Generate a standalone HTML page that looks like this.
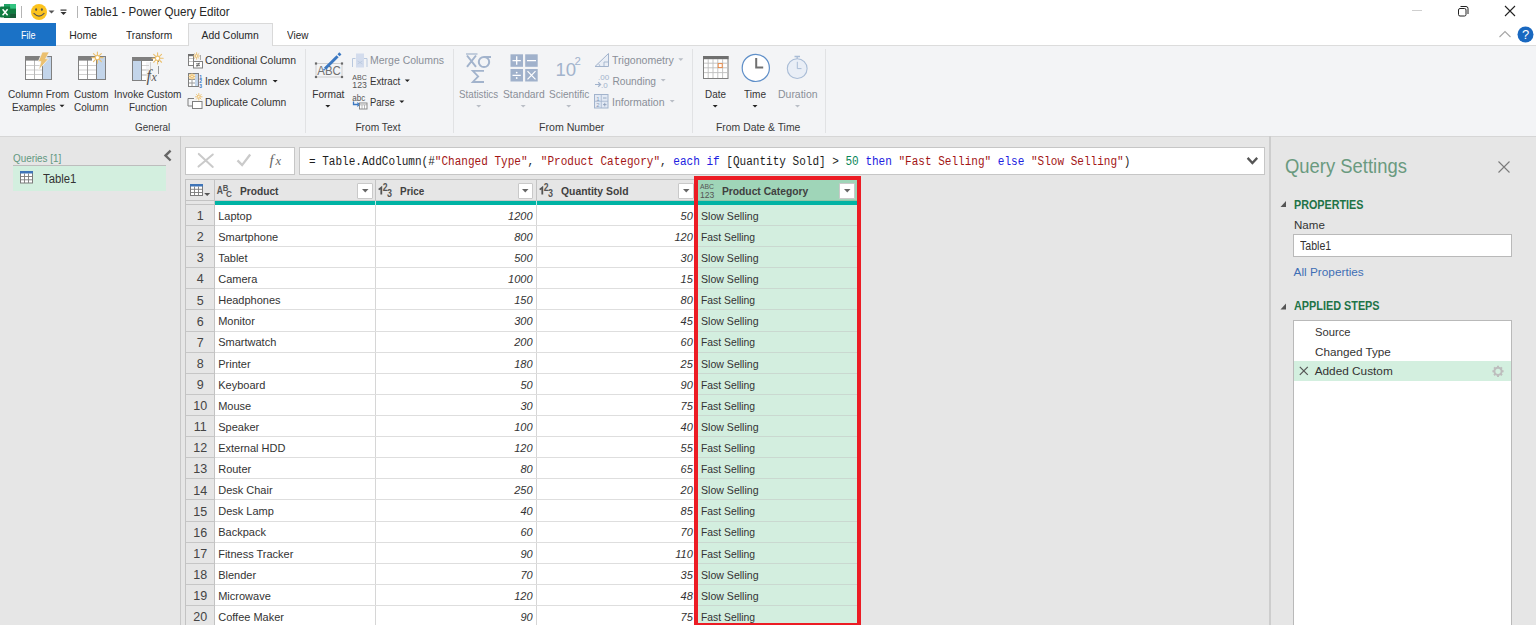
<!DOCTYPE html>
<html><head><meta charset="utf-8"><style>
html,body{margin:0;padding:0;width:1536px;height:625px;overflow:hidden;background:#e6e6e6;}
.t{position:absolute;white-space:nowrap;}
.r{position:absolute;}
svg.r{overflow:visible;}
</style></head><body>
<div class="r" style="left:0px;top:0px;width:1536px;height:23px;background:#ffffff;"></div>
<div class="r" style="left:0px;top:23px;width:1536px;height:23px;background:#ffffff;"></div>
<div class="r" style="left:0px;top:46px;width:1536px;height:90px;background:#f3f4f6;"></div>
<div class="r" style="left:0px;top:45px;width:1536px;height:1px;background:#dcdcdc;"></div>
<div class="r" style="left:0px;top:136px;width:1536px;height:489px;background:#e6e6e6;"></div>
<div class="r" style="left:0px;top:135.5px;width:1536px;height:1px;background:#d6d6d6;"></div>
<svg class="r" style="left:0px;top:3px" width="18" height="17" viewBox="0 0 18 17"><rect x="4" y="1" width="12" height="14" fill="#21a366"/>
<rect x="4" y="5.5" width="12" height="5" fill="#107c41"/>
<rect x="4" y="10.5" width="12" height="4.5" fill="#185c37"/>
<rect x="10" y="1" width="6" height="4.5" fill="#33c481"/>
<rect x="0" y="3.6" width="10.2" height="11" rx="0.8" fill="#107c41"/>
<path d="M2.6 6.2 L7.6 12.2 M7.6 6.2 L2.6 12.2" stroke="#fff" stroke-width="1.5"/></svg>
<div class="r" style="left:21px;top:5.5px;width:1px;height:12.5px;background:#b4b4b4;"></div>
<svg class="r" style="left:30px;top:3px" width="20" height="19" viewBox="0 0 20 19"><circle cx="9" cy="9" r="8" fill="#fcc31e"/>
<ellipse cx="6.1" cy="6.6" rx="1" ry="1.4" fill="#555"/><ellipse cx="11.9" cy="6.6" rx="1" ry="1.4" fill="#555"/>
<path d="M3.6 10.2 Q9 16 14.4 10.2" stroke="#555" stroke-width="1.1" fill="none"/></svg>
<svg class="r" style="left:48px;top:10px" width="8" height="4" viewBox="0 0 8 4"><path d="M0.5 0.5 L6.5 0.5 L3.5 3.5Z" fill="#555"/></svg>
<svg class="r" style="left:60px;top:9px" width="8" height="7" viewBox="0 0 8 7"><rect x="0.5" y="0.5" width="6" height="1.2" fill="#333"/><path d="M0.5 3 L6.5 3 L3.5 6Z" fill="#333"/></svg>
<div class="r" style="left:77px;top:5.5px;width:1px;height:12.5px;background:#b4b4b4;"></div>
<div class="t" style="left:84.30px;top:5.90px;font-size:12.40px;line-height:12.40px;color:#262626;font-family:'Liberation Sans', sans-serif;transform:scaleX(0.9355);transform-origin:0 0;">Table1 - Power Query Editor</div>
<div class="r" style="left:1412px;top:10px;width:10px;height:1px;background:#cfcfcf;"></div>
<svg class="r" style="left:1456px;top:5px" width="14" height="12" viewBox="0 0 14 12"><rect x="2.5" y="3.5" width="7.5" height="7.5" rx="1.5" fill="none" stroke="#222" stroke-width="1"/>
<path d="M4.5 1.5 H10 Q12 1.5 12 3.5 V9" fill="none" stroke="#222" stroke-width="1"/></svg>
<svg class="r" style="left:1504px;top:5px" width="12" height="12" viewBox="0 0 12 12"><path d="M1 1 L11 11 M11 1 L1 11" stroke="#222" stroke-width="1.1"/></svg>
<div class="r" style="left:0px;top:23px;width:56px;height:23px;background:#1b72c6;"></div>
<div class="t" style="left:20.60px;top:30.50px;font-size:10.40px;line-height:10.40px;color:#ffffff;font-family:'Liberation Sans', sans-serif;transform:scaleX(0.8720);transform-origin:0 0;">File</div>
<div class="t" style="left:69.30px;top:30.50px;font-size:10.40px;line-height:10.40px;color:#262626;font-family:'Liberation Sans', sans-serif;">Home</div>
<div class="t" style="left:125.90px;top:30.50px;font-size:10.40px;line-height:10.40px;color:#262626;font-family:'Liberation Sans', sans-serif;transform:scaleX(0.9828);transform-origin:0 0;">Transform</div>
<div class="r" style="left:188px;top:23px;width:85px;height:23px;background:#f3f4f6;border:1px solid #d9d9d9;border-bottom:none;box-sizing:border-box;"></div>
<div class="t" style="left:201.50px;top:30.50px;font-size:10.40px;line-height:10.40px;color:#262626;font-family:'Liberation Sans', sans-serif;">Add Column</div>
<div class="t" style="left:287.30px;top:30.50px;font-size:10.40px;line-height:10.40px;color:#262626;font-family:'Liberation Sans', sans-serif;transform:scaleX(0.9571);transform-origin:0 0;">View</div>
<svg class="r" style="left:1498px;top:30px" width="14" height="9" viewBox="0 0 14 9"><path d="M1.5 7 L7 1.5 L12.5 7" fill="none" stroke="#a6a6a6" stroke-width="1.1"/></svg>
<svg class="r" style="left:1517px;top:26px" width="18" height="18" viewBox="0 0 18 18"><circle cx="8.5" cy="8.5" r="8" fill="#1968c0"/><text x="8.5" y="13.3" text-anchor="middle" font-family="Liberation Sans" font-size="13" fill="#fff">?</text></svg>
<div class="r" style="left:305px;top:49px;width:1px;height:84px;background:#e1e2e4;"></div>
<div class="r" style="left:453px;top:49px;width:1px;height:84px;background:#e1e2e4;"></div>
<div class="r" style="left:692px;top:49px;width:1px;height:84px;background:#e1e2e4;"></div>
<div class="r" style="left:825px;top:49px;width:1px;height:84px;background:#e1e2e4;"></div>
<div class="t" style="left:134.90px;top:123.07px;font-size:10.20px;line-height:10.20px;color:#3a3a3a;font-family:'Liberation Sans', sans-serif;transform:scaleX(0.9694);transform-origin:0 0;">General</div>
<div class="t" style="left:355.40px;top:123.07px;font-size:10.20px;line-height:10.20px;color:#3a3a3a;font-family:'Liberation Sans', sans-serif;">From Text</div>
<div class="t" style="left:538.50px;top:123.07px;font-size:10.20px;line-height:10.20px;color:#3a3a3a;font-family:'Liberation Sans', sans-serif;transform:scaleX(1.0408);transform-origin:0 0;">From Number</div>
<div class="t" style="left:715.60px;top:123.07px;font-size:10.20px;line-height:10.20px;color:#3a3a3a;font-family:'Liberation Sans', sans-serif;transform:scaleX(1.0209);transform-origin:0 0;">From Date &amp; Time</div>
<div class="t" style="left:7.90px;top:89.67px;font-size:10.20px;line-height:10.20px;color:#333333;font-family:'Liberation Sans', sans-serif;transform:scaleX(0.9925);transform-origin:0 0;">Column From</div>
<div class="t" style="left:12.20px;top:102.87px;font-size:10.20px;line-height:10.20px;color:#333333;font-family:'Liberation Sans', sans-serif;transform:scaleX(0.9715);transform-origin:0 0;">Examples</div>
<div class="t" style="left:73.70px;top:89.67px;font-size:10.20px;line-height:10.20px;color:#333333;font-family:'Liberation Sans', sans-serif;transform:scaleX(0.9818);transform-origin:0 0;">Custom</div>
<div class="t" style="left:73.70px;top:102.87px;font-size:10.20px;line-height:10.20px;color:#333333;font-family:'Liberation Sans', sans-serif;transform:scaleX(0.9818);transform-origin:0 0;">Column</div>
<div class="t" style="left:113.60px;top:89.67px;font-size:10.20px;line-height:10.20px;color:#333333;font-family:'Liberation Sans', sans-serif;transform:scaleX(0.9936);transform-origin:0 0;">Invoke Custom</div>
<div class="t" style="left:128.50px;top:102.87px;font-size:10.20px;line-height:10.20px;color:#333333;font-family:'Liberation Sans', sans-serif;transform:scaleX(0.9714);transform-origin:0 0;">Function</div>
<div class="t" style="left:204.80px;top:56.17px;font-size:10.20px;line-height:10.20px;color:#333333;font-family:'Liberation Sans', sans-serif;transform:scaleX(1.0237);transform-origin:0 0;">Conditional Column</div>
<div class="t" style="left:204.80px;top:77.07px;font-size:10.20px;line-height:10.20px;color:#333333;font-family:'Liberation Sans', sans-serif;transform:scaleX(0.9883);transform-origin:0 0;">Index Column</div>
<div class="t" style="left:204.80px;top:97.87px;font-size:10.20px;line-height:10.20px;color:#333333;font-family:'Liberation Sans', sans-serif;transform:scaleX(1.0108);transform-origin:0 0;">Duplicate Column</div>
<div class="t" style="left:312.20px;top:89.67px;font-size:10.20px;line-height:10.20px;color:#333333;font-family:'Liberation Sans', sans-serif;">Format</div>
<div class="t" style="left:369.80px;top:56.17px;font-size:10.20px;line-height:10.20px;color:#8a8f98;font-family:'Liberation Sans', sans-serif;transform:scaleX(1.0290);transform-origin:0 0;">Merge Columns</div>
<div class="t" style="left:369.80px;top:77.07px;font-size:10.20px;line-height:10.20px;color:#333333;font-family:'Liberation Sans', sans-serif;transform:scaleX(0.9520);transform-origin:0 0;">Extract</div>
<div class="t" style="left:369.80px;top:97.87px;font-size:10.20px;line-height:10.20px;color:#333333;font-family:'Liberation Sans', sans-serif;transform:scaleX(0.9278);transform-origin:0 0;">Parse</div>
<div class="t" style="left:458.60px;top:89.67px;font-size:10.20px;line-height:10.20px;color:#8a8f98;font-family:'Liberation Sans', sans-serif;transform:scaleX(0.9608);transform-origin:0 0;">Statistics</div>
<div class="t" style="left:502.50px;top:89.67px;font-size:10.20px;line-height:10.20px;color:#8a8f98;font-family:'Liberation Sans', sans-serif;transform:scaleX(1.0094);transform-origin:0 0;">Standard</div>
<div class="t" style="left:548.60px;top:89.67px;font-size:10.20px;line-height:10.20px;color:#8a8f98;font-family:'Liberation Sans', sans-serif;transform:scaleX(0.9877);transform-origin:0 0;">Scientific</div>
<div class="t" style="left:612.40px;top:56.17px;font-size:10.20px;line-height:10.20px;color:#8a8f98;font-family:'Liberation Sans', sans-serif;transform:scaleX(1.0365);transform-origin:0 0;">Trigonometry</div>
<div class="t" style="left:612.40px;top:77.07px;font-size:10.20px;line-height:10.20px;color:#8a8f98;font-family:'Liberation Sans', sans-serif;">Rounding</div>
<div class="t" style="left:612.40px;top:97.87px;font-size:10.20px;line-height:10.20px;color:#8a8f98;font-family:'Liberation Sans', sans-serif;transform:scaleX(1.0303);transform-origin:0 0;">Information</div>
<div class="t" style="left:705.10px;top:89.67px;font-size:10.20px;line-height:10.20px;color:#333333;font-family:'Liberation Sans', sans-serif;transform:scaleX(0.9711);transform-origin:0 0;">Date</div>
<div class="t" style="left:744.00px;top:89.67px;font-size:10.20px;line-height:10.20px;color:#333333;font-family:'Liberation Sans', sans-serif;transform:scaleX(0.9871);transform-origin:0 0;">Time</div>
<div class="t" style="left:777.80px;top:89.67px;font-size:10.20px;line-height:10.20px;color:#8a8f98;font-family:'Liberation Sans', sans-serif;transform:scaleX(1.0271);transform-origin:0 0;">Duration</div>
<div class="r" style="left:180px;top:136px;width:1px;height:489px;background:#c8c8c8;"></div>
<div class="t" style="left:13.00px;top:152.59px;font-size:11.00px;line-height:11.00px;color:#62987f;font-family:'Liberation Sans', sans-serif;transform:scaleX(0.8961);transform-origin:0 0;">Queries [1]</div>
<svg class="r" style="left:162px;top:149px" width="12" height="13" viewBox="0 0 12 13"><path d="M8.6 1.7 L3.5 6.6 L8.6 11.5" fill="none" stroke="#666" stroke-width="2.4"/></svg>
<div class="r" style="left:13px;top:165px;width:152.5px;height:1.2px;background:#bdbdbd;"></div>
<div class="r" style="left:13px;top:166px;width:152.5px;height:24.5px;background:#d3efdf;"></div>
<div class="t" style="left:42.70px;top:173.14px;font-size:12.00px;line-height:12.00px;color:#333;font-family:'Liberation Sans', sans-serif;transform:scaleX(0.9423);transform-origin:0 0;">Table1</div>
<div class="r" style="left:1269px;top:136px;width:1.5px;height:489px;background:#cdcdcd;"></div>
<div class="t" style="left:1284.90px;top:157.04px;font-size:19.80px;line-height:19.80px;color:#6a9a7f;font-family:'Liberation Sans', sans-serif;transform:scaleX(0.9315);transform-origin:0 0;">Query Settings</div>
<svg class="r" style="left:1497px;top:160px" width="15" height="14" viewBox="0 0 15 14"><path d="M1.5 1.5 L12.5 12.5 M12.5 1.5 L1.5 12.5" stroke="#7a7a7a" stroke-width="1.1"/></svg>
<svg class="r" style="left:1280px;top:200px" width="7" height="8" viewBox="0 0 7 8"><path d="M6 1 L6 7 L0.5 7Z" fill="#555"/></svg>
<div class="t" style="left:1293.60px;top:198.69px;font-size:12.30px;line-height:12.30px;color:#217346;font-family:'Liberation Sans', sans-serif;font-weight:bold;transform:scaleX(0.8767);transform-origin:0 0;">PROPERTIES</div>
<div class="t" style="left:1293.60px;top:219.51px;font-size:11.80px;line-height:11.80px;color:#333;font-family:'Liberation Sans', sans-serif;transform:scaleX(0.9808);transform-origin:0 0;">Name</div>
<div class="r" style="left:1293px;top:234px;width:219px;height:23px;background:#ffffff;border:1px solid #b9b9b9;box-sizing:border-box;"></div>
<div class="t" style="left:1299.80px;top:239.40px;font-size:13.00px;line-height:13.00px;color:#333;font-family:'Liberation Sans', sans-serif;transform:scaleX(0.8149);transform-origin:0 0;">Table1</div>
<div class="t" style="left:1293.60px;top:267.21px;font-size:11.80px;line-height:11.80px;color:#3f6eb5;font-family:'Liberation Sans', sans-serif;">All Properties</div>
<svg class="r" style="left:1280px;top:303px" width="7" height="7" viewBox="0 0 7 7"><path d="M6 0.5 L6 6.5 L0.5 6.5Z" fill="#555"/></svg>
<div class="t" style="left:1293.60px;top:300.49px;font-size:12.30px;line-height:12.30px;color:#217346;font-family:'Liberation Sans', sans-serif;font-weight:bold;transform:scaleX(0.8820);transform-origin:0 0;">APPLIED STEPS</div>
<div class="r" style="left:1293px;top:320px;width:219px;height:320px;background:#ffffff;border:1px solid #b9b9b9;box-sizing:border-box;"></div>
<div class="t" style="left:1314.70px;top:326.81px;font-size:11.80px;line-height:11.80px;color:#333;font-family:'Liberation Sans', sans-serif;transform:scaleX(0.9490);transform-origin:0 0;">Source</div>
<div class="t" style="left:1314.70px;top:346.61px;font-size:11.80px;line-height:11.80px;color:#333;font-family:'Liberation Sans', sans-serif;transform:scaleX(0.9906);transform-origin:0 0;">Changed Type</div>
<div class="r" style="left:1294px;top:361px;width:217px;height:19.7px;background:#d3efdf;"></div>
<div class="t" style="left:1314.70px;top:366.31px;font-size:11.80px;line-height:11.80px;color:#333;font-family:'Liberation Sans', sans-serif;">Added Custom</div>
<div class="r" style="left:185px;top:147px;width:110px;height:28px;background:#ffffff;border:1px solid #c6c6c6;box-sizing:border-box;"></div>
<svg class="r" style="left:196px;top:152px" width="18" height="17" viewBox="0 0 18 17"><path d="M2.8 1.9 L16.8 14.9 M16.8 2.5 L2.5 14.6" stroke="#cacaca" stroke-width="2" stroke-linecap="round"/></svg>
<svg class="r" style="left:235px;top:152px" width="18" height="16" viewBox="0 0 18 16"><path d="M2.5 8.4 L7.1 13.1 L15.2 2.5" fill="none" stroke="#cacaca" stroke-width="2.3" stroke-linejoin="miter"/></svg>
<svg class="r" style="left:266px;top:150px" width="20" height="20" viewBox="0 0 20 20"><text x="3.5" y="14.5" font-family="Liberation Serif" font-style="italic" font-size="15" fill="#666">f</text><text x="9.6" y="15.4" font-family="Liberation Serif" font-style="italic" font-size="12.5" fill="#666">x</text></svg>
<div class="r" style="left:299px;top:147px;width:966px;height:28px;background:#ffffff;border:1px solid #c6c6c6;box-sizing:border-box;"></div>
<svg class="r" style="left:1246px;top:156px" width="13" height="10" viewBox="0 0 13 10"><path d="M1.6 1.9 L6.4 7 L11.2 1.9" fill="none" stroke="#555" stroke-width="2.3"/></svg>
<div class="t" style="left:309.4px;top:155.80px;font-family:'Liberation Mono',monospace;font-size:12px;line-height:12px;transform:scaleX(0.9197);transform-origin:0 0;"><span style="color:#1e1e1e">= Table.AddColumn(#</span><span style="color:#a31515">"Changed Type"</span><span style="color:#1e1e1e">, </span><span style="color:#a31515">"Product Category"</span><span style="color:#1e1e1e">, </span><span style="color:#2020e0">each</span><span style="color:#1e1e1e"> </span><span style="color:#2020e0">if</span><span style="color:#1e1e1e"> [Quantity Sold] &gt; </span><span style="color:#098658">50</span><span style="color:#1e1e1e"> </span><span style="color:#2020e0">then</span><span style="color:#1e1e1e"> </span><span style="color:#a31515">"Fast Selling"</span><span style="color:#1e1e1e"> </span><span style="color:#2020e0">else</span><span style="color:#1e1e1e"> </span><span style="color:#a31515">"Slow Selling"</span><span style="color:#1e1e1e">)</span></div>
<div class="r" style="left:185px;top:179px;width:673px;height:22px;background:#e6e6e6;"></div>
<div class="r" style="left:185px;top:179px;width:673px;height:1px;background:#c3c3c3;"></div>
<div class="r" style="left:185px;top:179px;width:1px;height:446px;background:#c3c3c3;"></div>
<div class="r" style="left:186px;top:201px;width:28.4px;height:424px;background:#e6e6e6;"></div>
<div class="r" style="left:214.4px;top:205px;width:643px;height:420px;background:#ffffff;"></div>
<div class="r" style="left:697px;top:205px;width:161px;height:420px;background:#d3eedf;"></div>
<div class="r" style="left:697px;top:180px;width:161px;height:21px;background:#9fd5b8;"></div>
<div class="r" style="left:214.9px;top:200.9px;width:643px;height:3.8px;background:#00b3a4;"></div>
<div class="r" style="left:215px;top:200px;width:482px;height:1px;background:#c9c9c9;"></div>
<div class="r" style="left:697px;top:200px;width:161px;height:1px;background:#8fc4a8;"></div>
<div class="r" style="left:374.65px;top:201px;width:1.5px;height:4px;background:#bfe9e4;"></div>
<div class="r" style="left:535.75px;top:201px;width:1.5px;height:4px;background:#bfe9e4;"></div>
<div class="r" style="left:186px;top:200px;width:28.4px;height:1px;background:#c3c3c3;"></div>
<div class="r" style="left:186px;top:204px;width:28.4px;height:1px;background:#c3c3c3;"></div>
<div class="r" style="left:214px;top:179px;width:1px;height:446px;background:#c3c3c3;"></div>
<div class="r" style="left:374.9px;top:180px;width:1px;height:20.5px;background:#c3c3c3;"></div>
<div class="r" style="left:374.9px;top:205px;width:1px;height:420px;background:#d6d6d6;"></div>
<div class="r" style="left:536.0px;top:180px;width:1px;height:20.5px;background:#c3c3c3;"></div>
<div class="r" style="left:536.0px;top:205px;width:1px;height:420px;background:#d6d6d6;"></div>
<div class="r" style="left:696.5px;top:180px;width:1px;height:20.5px;background:#c3c3c3;"></div>
<div class="r" style="left:696.5px;top:205px;width:1px;height:420px;background:#d6d6d6;"></div>
<div class="r" style="left:186px;top:225px;width:28px;height:1px;background:#c6c6c6;"></div>
<div class="r" style="left:215px;top:225px;width:482px;height:1px;background:#dedede;"></div>
<div class="r" style="left:697px;top:225px;width:161px;height:1px;background:#cad8d0;"></div>
<div class="r" style="left:186px;top:246px;width:28px;height:1px;background:#c6c6c6;"></div>
<div class="r" style="left:215px;top:246px;width:482px;height:1px;background:#dedede;"></div>
<div class="r" style="left:697px;top:246px;width:161px;height:1px;background:#cad8d0;"></div>
<div class="r" style="left:186px;top:267px;width:28px;height:1px;background:#c6c6c6;"></div>
<div class="r" style="left:215px;top:267px;width:482px;height:1px;background:#dedede;"></div>
<div class="r" style="left:697px;top:267px;width:161px;height:1px;background:#cad8d0;"></div>
<div class="r" style="left:186px;top:288px;width:28px;height:1px;background:#c6c6c6;"></div>
<div class="r" style="left:215px;top:288px;width:482px;height:1px;background:#dedede;"></div>
<div class="r" style="left:697px;top:288px;width:161px;height:1px;background:#cad8d0;"></div>
<div class="r" style="left:186px;top:309px;width:28px;height:1px;background:#c6c6c6;"></div>
<div class="r" style="left:215px;top:309px;width:482px;height:1px;background:#dedede;"></div>
<div class="r" style="left:697px;top:309px;width:161px;height:1px;background:#cad8d0;"></div>
<div class="r" style="left:186px;top:331px;width:28px;height:1px;background:#c6c6c6;"></div>
<div class="r" style="left:215px;top:331px;width:482px;height:1px;background:#dedede;"></div>
<div class="r" style="left:697px;top:331px;width:161px;height:1px;background:#cad8d0;"></div>
<div class="r" style="left:186px;top:352px;width:28px;height:1px;background:#c6c6c6;"></div>
<div class="r" style="left:215px;top:352px;width:482px;height:1px;background:#dedede;"></div>
<div class="r" style="left:697px;top:352px;width:161px;height:1px;background:#cad8d0;"></div>
<div class="r" style="left:186px;top:373px;width:28px;height:1px;background:#c6c6c6;"></div>
<div class="r" style="left:215px;top:373px;width:482px;height:1px;background:#dedede;"></div>
<div class="r" style="left:697px;top:373px;width:161px;height:1px;background:#cad8d0;"></div>
<div class="r" style="left:186px;top:394px;width:28px;height:1px;background:#c6c6c6;"></div>
<div class="r" style="left:215px;top:394px;width:482px;height:1px;background:#dedede;"></div>
<div class="r" style="left:697px;top:394px;width:161px;height:1px;background:#cad8d0;"></div>
<div class="r" style="left:186px;top:415px;width:28px;height:1px;background:#c6c6c6;"></div>
<div class="r" style="left:215px;top:415px;width:482px;height:1px;background:#dedede;"></div>
<div class="r" style="left:697px;top:415px;width:161px;height:1px;background:#cad8d0;"></div>
<div class="r" style="left:186px;top:436px;width:28px;height:1px;background:#c6c6c6;"></div>
<div class="r" style="left:215px;top:436px;width:482px;height:1px;background:#dedede;"></div>
<div class="r" style="left:697px;top:436px;width:161px;height:1px;background:#cad8d0;"></div>
<div class="r" style="left:186px;top:457px;width:28px;height:1px;background:#c6c6c6;"></div>
<div class="r" style="left:215px;top:457px;width:482px;height:1px;background:#dedede;"></div>
<div class="r" style="left:697px;top:457px;width:161px;height:1px;background:#cad8d0;"></div>
<div class="r" style="left:186px;top:478px;width:28px;height:1px;background:#c6c6c6;"></div>
<div class="r" style="left:215px;top:478px;width:482px;height:1px;background:#dedede;"></div>
<div class="r" style="left:697px;top:478px;width:161px;height:1px;background:#cad8d0;"></div>
<div class="r" style="left:186px;top:499px;width:28px;height:1px;background:#c6c6c6;"></div>
<div class="r" style="left:215px;top:499px;width:482px;height:1px;background:#dedede;"></div>
<div class="r" style="left:697px;top:499px;width:161px;height:1px;background:#cad8d0;"></div>
<div class="r" style="left:186px;top:521px;width:28px;height:1px;background:#c6c6c6;"></div>
<div class="r" style="left:215px;top:521px;width:482px;height:1px;background:#dedede;"></div>
<div class="r" style="left:697px;top:521px;width:161px;height:1px;background:#cad8d0;"></div>
<div class="r" style="left:186px;top:542px;width:28px;height:1px;background:#c6c6c6;"></div>
<div class="r" style="left:215px;top:542px;width:482px;height:1px;background:#dedede;"></div>
<div class="r" style="left:697px;top:542px;width:161px;height:1px;background:#cad8d0;"></div>
<div class="r" style="left:186px;top:563px;width:28px;height:1px;background:#c6c6c6;"></div>
<div class="r" style="left:215px;top:563px;width:482px;height:1px;background:#dedede;"></div>
<div class="r" style="left:697px;top:563px;width:161px;height:1px;background:#cad8d0;"></div>
<div class="r" style="left:186px;top:584px;width:28px;height:1px;background:#c6c6c6;"></div>
<div class="r" style="left:215px;top:584px;width:482px;height:1px;background:#dedede;"></div>
<div class="r" style="left:697px;top:584px;width:161px;height:1px;background:#cad8d0;"></div>
<div class="r" style="left:186px;top:605px;width:28px;height:1px;background:#c6c6c6;"></div>
<div class="r" style="left:215px;top:605px;width:482px;height:1px;background:#dedede;"></div>
<div class="r" style="left:697px;top:605px;width:161px;height:1px;background:#cad8d0;"></div>
<div class="r" style="left:186px;top:626px;width:28px;height:1px;background:#c6c6c6;"></div>
<div class="r" style="left:215px;top:626px;width:482px;height:1px;background:#dedede;"></div>
<div class="r" style="left:697px;top:626px;width:161px;height:1px;background:#cad8d0;"></div>
<div class="r" style="left:357.3px;top:182.5px;width:15.5px;height:16px;background:#ffffff;border:1px solid #c9c9c9;box-sizing:border-box;border-radius:1px;"></div>
<svg class="r" style="left:361.8px;top:188.5px" width="7" height="4" viewBox="0 0 7 4"><path d="M0 0 L6.5 0 L3.25 3.5Z" fill="#666"/></svg>
<div class="r" style="left:517.7px;top:182.5px;width:15.5px;height:16px;background:#ffffff;border:1px solid #c9c9c9;box-sizing:border-box;border-radius:1px;"></div>
<svg class="r" style="left:522.2px;top:188.5px" width="7" height="4" viewBox="0 0 7 4"><path d="M0 0 L6.5 0 L3.25 3.5Z" fill="#666"/></svg>
<div class="r" style="left:678.3px;top:182.5px;width:15.5px;height:16px;background:#ffffff;border:1px solid #c9c9c9;box-sizing:border-box;border-radius:1px;"></div>
<svg class="r" style="left:682.8px;top:188.5px" width="7" height="4" viewBox="0 0 7 4"><path d="M0 0 L6.5 0 L3.25 3.5Z" fill="#666"/></svg>
<div class="r" style="left:839.4px;top:182.5px;width:15.5px;height:16px;background:#ffffff;border:1px solid #c9c9c9;box-sizing:border-box;border-radius:1px;"></div>
<svg class="r" style="left:843.9px;top:188.5px" width="7" height="4" viewBox="0 0 7 4"><path d="M0 0 L6.5 0 L3.25 3.5Z" fill="#666"/></svg>
<div class="t" style="left:196.72px;top:210.02px;font-size:12.50px;line-height:12.50px;color:#444444;font-family:'Liberation Sans', sans-serif;">1</div>
<div class="t" style="left:218.20px;top:210.69px;font-size:11.00px;line-height:11.00px;color:#333333;font-family:'Liberation Sans', sans-serif;">Laptop</div>
<div class="t" style="left:508.12px;top:210.69px;font-size:11.00px;line-height:11.00px;color:#333333;font-family:'Liberation Sans', sans-serif;font-style:italic;">1200</div>
<div class="t" style="left:680.59px;top:210.69px;font-size:11.00px;line-height:11.00px;color:#333333;font-family:'Liberation Sans', sans-serif;font-style:italic;">50</div>
<div class="t" style="left:700.60px;top:210.69px;font-size:11.00px;line-height:11.00px;color:#333333;font-family:'Liberation Sans', sans-serif;transform:scaleX(0.9608);transform-origin:0 0;">Slow Selling</div>
<div class="t" style="left:196.72px;top:231.14px;font-size:12.50px;line-height:12.50px;color:#444444;font-family:'Liberation Sans', sans-serif;">2</div>
<div class="t" style="left:218.20px;top:231.81px;font-size:11.00px;line-height:11.00px;color:#333333;font-family:'Liberation Sans', sans-serif;">Smartphone</div>
<div class="t" style="left:514.23px;top:231.81px;font-size:11.00px;line-height:11.00px;color:#333333;font-family:'Liberation Sans', sans-serif;font-style:italic;">800</div>
<div class="t" style="left:674.43px;top:231.81px;font-size:11.00px;line-height:11.00px;color:#333333;font-family:'Liberation Sans', sans-serif;font-style:italic;">120</div>
<div class="t" style="left:700.60px;top:231.81px;font-size:11.00px;line-height:11.00px;color:#333333;font-family:'Liberation Sans', sans-serif;transform:scaleX(0.9413);transform-origin:0 0;">Fast Selling</div>
<div class="t" style="left:196.72px;top:252.26px;font-size:12.50px;line-height:12.50px;color:#444444;font-family:'Liberation Sans', sans-serif;">3</div>
<div class="t" style="left:218.20px;top:252.93px;font-size:11.00px;line-height:11.00px;color:#333333;font-family:'Liberation Sans', sans-serif;">Tablet</div>
<div class="t" style="left:514.23px;top:252.93px;font-size:11.00px;line-height:11.00px;color:#333333;font-family:'Liberation Sans', sans-serif;font-style:italic;">500</div>
<div class="t" style="left:680.59px;top:252.93px;font-size:11.00px;line-height:11.00px;color:#333333;font-family:'Liberation Sans', sans-serif;font-style:italic;">30</div>
<div class="t" style="left:700.60px;top:252.93px;font-size:11.00px;line-height:11.00px;color:#333333;font-family:'Liberation Sans', sans-serif;transform:scaleX(0.9608);transform-origin:0 0;">Slow Selling</div>
<div class="t" style="left:196.72px;top:273.38px;font-size:12.50px;line-height:12.50px;color:#444444;font-family:'Liberation Sans', sans-serif;">4</div>
<div class="t" style="left:218.20px;top:274.05px;font-size:11.00px;line-height:11.00px;color:#333333;font-family:'Liberation Sans', sans-serif;">Camera</div>
<div class="t" style="left:508.12px;top:274.05px;font-size:11.00px;line-height:11.00px;color:#333333;font-family:'Liberation Sans', sans-serif;font-style:italic;">1000</div>
<div class="t" style="left:680.53px;top:274.05px;font-size:11.00px;line-height:11.00px;color:#333333;font-family:'Liberation Sans', sans-serif;font-style:italic;">15</div>
<div class="t" style="left:700.60px;top:274.05px;font-size:11.00px;line-height:11.00px;color:#333333;font-family:'Liberation Sans', sans-serif;transform:scaleX(0.9608);transform-origin:0 0;">Slow Selling</div>
<div class="t" style="left:196.72px;top:294.50px;font-size:12.50px;line-height:12.50px;color:#444444;font-family:'Liberation Sans', sans-serif;">5</div>
<div class="t" style="left:218.20px;top:295.17px;font-size:11.00px;line-height:11.00px;color:#333333;font-family:'Liberation Sans', sans-serif;">Headphones</div>
<div class="t" style="left:514.23px;top:295.17px;font-size:11.00px;line-height:11.00px;color:#333333;font-family:'Liberation Sans', sans-serif;font-style:italic;">150</div>
<div class="t" style="left:680.59px;top:295.17px;font-size:11.00px;line-height:11.00px;color:#333333;font-family:'Liberation Sans', sans-serif;font-style:italic;">80</div>
<div class="t" style="left:700.60px;top:295.17px;font-size:11.00px;line-height:11.00px;color:#333333;font-family:'Liberation Sans', sans-serif;transform:scaleX(0.9413);transform-origin:0 0;">Fast Selling</div>
<div class="t" style="left:196.72px;top:315.62px;font-size:12.50px;line-height:12.50px;color:#444444;font-family:'Liberation Sans', sans-serif;">6</div>
<div class="t" style="left:218.20px;top:316.29px;font-size:11.00px;line-height:11.00px;color:#333333;font-family:'Liberation Sans', sans-serif;">Monitor</div>
<div class="t" style="left:514.23px;top:316.29px;font-size:11.00px;line-height:11.00px;color:#333333;font-family:'Liberation Sans', sans-serif;font-style:italic;">300</div>
<div class="t" style="left:680.53px;top:316.29px;font-size:11.00px;line-height:11.00px;color:#333333;font-family:'Liberation Sans', sans-serif;font-style:italic;">45</div>
<div class="t" style="left:700.60px;top:316.29px;font-size:11.00px;line-height:11.00px;color:#333333;font-family:'Liberation Sans', sans-serif;transform:scaleX(0.9608);transform-origin:0 0;">Slow Selling</div>
<div class="t" style="left:196.72px;top:336.74px;font-size:12.50px;line-height:12.50px;color:#444444;font-family:'Liberation Sans', sans-serif;">7</div>
<div class="t" style="left:218.20px;top:337.41px;font-size:11.00px;line-height:11.00px;color:#333333;font-family:'Liberation Sans', sans-serif;">Smartwatch</div>
<div class="t" style="left:514.23px;top:337.41px;font-size:11.00px;line-height:11.00px;color:#333333;font-family:'Liberation Sans', sans-serif;font-style:italic;">200</div>
<div class="t" style="left:680.59px;top:337.41px;font-size:11.00px;line-height:11.00px;color:#333333;font-family:'Liberation Sans', sans-serif;font-style:italic;">60</div>
<div class="t" style="left:700.60px;top:337.41px;font-size:11.00px;line-height:11.00px;color:#333333;font-family:'Liberation Sans', sans-serif;transform:scaleX(0.9413);transform-origin:0 0;">Fast Selling</div>
<div class="t" style="left:196.72px;top:357.86px;font-size:12.50px;line-height:12.50px;color:#444444;font-family:'Liberation Sans', sans-serif;">8</div>
<div class="t" style="left:218.20px;top:358.53px;font-size:11.00px;line-height:11.00px;color:#333333;font-family:'Liberation Sans', sans-serif;">Printer</div>
<div class="t" style="left:514.23px;top:358.53px;font-size:11.00px;line-height:11.00px;color:#333333;font-family:'Liberation Sans', sans-serif;font-style:italic;">180</div>
<div class="t" style="left:680.53px;top:358.53px;font-size:11.00px;line-height:11.00px;color:#333333;font-family:'Liberation Sans', sans-serif;font-style:italic;">25</div>
<div class="t" style="left:700.60px;top:358.53px;font-size:11.00px;line-height:11.00px;color:#333333;font-family:'Liberation Sans', sans-serif;transform:scaleX(0.9608);transform-origin:0 0;">Slow Selling</div>
<div class="t" style="left:196.72px;top:378.98px;font-size:12.50px;line-height:12.50px;color:#444444;font-family:'Liberation Sans', sans-serif;">9</div>
<div class="t" style="left:218.20px;top:379.65px;font-size:11.00px;line-height:11.00px;color:#333333;font-family:'Liberation Sans', sans-serif;">Keyboard</div>
<div class="t" style="left:520.39px;top:379.65px;font-size:11.00px;line-height:11.00px;color:#333333;font-family:'Liberation Sans', sans-serif;font-style:italic;">50</div>
<div class="t" style="left:680.59px;top:379.65px;font-size:11.00px;line-height:11.00px;color:#333333;font-family:'Liberation Sans', sans-serif;font-style:italic;">90</div>
<div class="t" style="left:700.60px;top:379.65px;font-size:11.00px;line-height:11.00px;color:#333333;font-family:'Liberation Sans', sans-serif;transform:scaleX(0.9413);transform-origin:0 0;">Fast Selling</div>
<div class="t" style="left:193.25px;top:400.10px;font-size:12.50px;line-height:12.50px;color:#444444;font-family:'Liberation Sans', sans-serif;">10</div>
<div class="t" style="left:218.20px;top:400.77px;font-size:11.00px;line-height:11.00px;color:#333333;font-family:'Liberation Sans', sans-serif;">Mouse</div>
<div class="t" style="left:520.39px;top:400.77px;font-size:11.00px;line-height:11.00px;color:#333333;font-family:'Liberation Sans', sans-serif;font-style:italic;">30</div>
<div class="t" style="left:680.53px;top:400.77px;font-size:11.00px;line-height:11.00px;color:#333333;font-family:'Liberation Sans', sans-serif;font-style:italic;">75</div>
<div class="t" style="left:700.60px;top:400.77px;font-size:11.00px;line-height:11.00px;color:#333333;font-family:'Liberation Sans', sans-serif;transform:scaleX(0.9413);transform-origin:0 0;">Fast Selling</div>
<div class="t" style="left:193.71px;top:421.22px;font-size:12.50px;line-height:12.50px;color:#444444;font-family:'Liberation Sans', sans-serif;">11</div>
<div class="t" style="left:218.20px;top:421.89px;font-size:11.00px;line-height:11.00px;color:#333333;font-family:'Liberation Sans', sans-serif;">Speaker</div>
<div class="t" style="left:514.23px;top:421.89px;font-size:11.00px;line-height:11.00px;color:#333333;font-family:'Liberation Sans', sans-serif;font-style:italic;">100</div>
<div class="t" style="left:680.59px;top:421.89px;font-size:11.00px;line-height:11.00px;color:#333333;font-family:'Liberation Sans', sans-serif;font-style:italic;">40</div>
<div class="t" style="left:700.60px;top:421.89px;font-size:11.00px;line-height:11.00px;color:#333333;font-family:'Liberation Sans', sans-serif;transform:scaleX(0.9608);transform-origin:0 0;">Slow Selling</div>
<div class="t" style="left:193.25px;top:442.34px;font-size:12.50px;line-height:12.50px;color:#444444;font-family:'Liberation Sans', sans-serif;">12</div>
<div class="t" style="left:218.20px;top:443.01px;font-size:11.00px;line-height:11.00px;color:#333333;font-family:'Liberation Sans', sans-serif;">External HDD</div>
<div class="t" style="left:514.23px;top:443.01px;font-size:11.00px;line-height:11.00px;color:#333333;font-family:'Liberation Sans', sans-serif;font-style:italic;">120</div>
<div class="t" style="left:680.53px;top:443.01px;font-size:11.00px;line-height:11.00px;color:#333333;font-family:'Liberation Sans', sans-serif;font-style:italic;">55</div>
<div class="t" style="left:700.60px;top:443.01px;font-size:11.00px;line-height:11.00px;color:#333333;font-family:'Liberation Sans', sans-serif;transform:scaleX(0.9413);transform-origin:0 0;">Fast Selling</div>
<div class="t" style="left:193.25px;top:463.46px;font-size:12.50px;line-height:12.50px;color:#444444;font-family:'Liberation Sans', sans-serif;">13</div>
<div class="t" style="left:218.20px;top:464.13px;font-size:11.00px;line-height:11.00px;color:#333333;font-family:'Liberation Sans', sans-serif;">Router</div>
<div class="t" style="left:520.39px;top:464.13px;font-size:11.00px;line-height:11.00px;color:#333333;font-family:'Liberation Sans', sans-serif;font-style:italic;">80</div>
<div class="t" style="left:680.53px;top:464.13px;font-size:11.00px;line-height:11.00px;color:#333333;font-family:'Liberation Sans', sans-serif;font-style:italic;">65</div>
<div class="t" style="left:700.60px;top:464.13px;font-size:11.00px;line-height:11.00px;color:#333333;font-family:'Liberation Sans', sans-serif;transform:scaleX(0.9413);transform-origin:0 0;">Fast Selling</div>
<div class="t" style="left:193.25px;top:484.58px;font-size:12.50px;line-height:12.50px;color:#444444;font-family:'Liberation Sans', sans-serif;">14</div>
<div class="t" style="left:218.20px;top:485.25px;font-size:11.00px;line-height:11.00px;color:#333333;font-family:'Liberation Sans', sans-serif;">Desk Chair</div>
<div class="t" style="left:514.23px;top:485.25px;font-size:11.00px;line-height:11.00px;color:#333333;font-family:'Liberation Sans', sans-serif;font-style:italic;">250</div>
<div class="t" style="left:680.59px;top:485.25px;font-size:11.00px;line-height:11.00px;color:#333333;font-family:'Liberation Sans', sans-serif;font-style:italic;">20</div>
<div class="t" style="left:700.60px;top:485.25px;font-size:11.00px;line-height:11.00px;color:#333333;font-family:'Liberation Sans', sans-serif;transform:scaleX(0.9608);transform-origin:0 0;">Slow Selling</div>
<div class="t" style="left:193.25px;top:505.70px;font-size:12.50px;line-height:12.50px;color:#444444;font-family:'Liberation Sans', sans-serif;">15</div>
<div class="t" style="left:218.20px;top:506.37px;font-size:11.00px;line-height:11.00px;color:#333333;font-family:'Liberation Sans', sans-serif;">Desk Lamp</div>
<div class="t" style="left:520.39px;top:506.37px;font-size:11.00px;line-height:11.00px;color:#333333;font-family:'Liberation Sans', sans-serif;font-style:italic;">40</div>
<div class="t" style="left:680.53px;top:506.37px;font-size:11.00px;line-height:11.00px;color:#333333;font-family:'Liberation Sans', sans-serif;font-style:italic;">85</div>
<div class="t" style="left:700.60px;top:506.37px;font-size:11.00px;line-height:11.00px;color:#333333;font-family:'Liberation Sans', sans-serif;transform:scaleX(0.9413);transform-origin:0 0;">Fast Selling</div>
<div class="t" style="left:193.25px;top:526.82px;font-size:12.50px;line-height:12.50px;color:#444444;font-family:'Liberation Sans', sans-serif;">16</div>
<div class="t" style="left:218.20px;top:527.49px;font-size:11.00px;line-height:11.00px;color:#333333;font-family:'Liberation Sans', sans-serif;">Backpack</div>
<div class="t" style="left:520.39px;top:527.49px;font-size:11.00px;line-height:11.00px;color:#333333;font-family:'Liberation Sans', sans-serif;font-style:italic;">60</div>
<div class="t" style="left:680.59px;top:527.49px;font-size:11.00px;line-height:11.00px;color:#333333;font-family:'Liberation Sans', sans-serif;font-style:italic;">70</div>
<div class="t" style="left:700.60px;top:527.49px;font-size:11.00px;line-height:11.00px;color:#333333;font-family:'Liberation Sans', sans-serif;transform:scaleX(0.9413);transform-origin:0 0;">Fast Selling</div>
<div class="t" style="left:193.25px;top:547.94px;font-size:12.50px;line-height:12.50px;color:#444444;font-family:'Liberation Sans', sans-serif;">17</div>
<div class="t" style="left:218.20px;top:548.61px;font-size:11.00px;line-height:11.00px;color:#333333;font-family:'Liberation Sans', sans-serif;">Fitness Tracker</div>
<div class="t" style="left:520.39px;top:548.61px;font-size:11.00px;line-height:11.00px;color:#333333;font-family:'Liberation Sans', sans-serif;font-style:italic;">90</div>
<div class="t" style="left:675.25px;top:548.61px;font-size:11.00px;line-height:11.00px;color:#333333;font-family:'Liberation Sans', sans-serif;font-style:italic;">110</div>
<div class="t" style="left:700.60px;top:548.61px;font-size:11.00px;line-height:11.00px;color:#333333;font-family:'Liberation Sans', sans-serif;transform:scaleX(0.9413);transform-origin:0 0;">Fast Selling</div>
<div class="t" style="left:193.25px;top:569.06px;font-size:12.50px;line-height:12.50px;color:#444444;font-family:'Liberation Sans', sans-serif;">18</div>
<div class="t" style="left:218.20px;top:569.73px;font-size:11.00px;line-height:11.00px;color:#333333;font-family:'Liberation Sans', sans-serif;">Blender</div>
<div class="t" style="left:520.39px;top:569.73px;font-size:11.00px;line-height:11.00px;color:#333333;font-family:'Liberation Sans', sans-serif;font-style:italic;">70</div>
<div class="t" style="left:680.53px;top:569.73px;font-size:11.00px;line-height:11.00px;color:#333333;font-family:'Liberation Sans', sans-serif;font-style:italic;">35</div>
<div class="t" style="left:700.60px;top:569.73px;font-size:11.00px;line-height:11.00px;color:#333333;font-family:'Liberation Sans', sans-serif;transform:scaleX(0.9608);transform-origin:0 0;">Slow Selling</div>
<div class="t" style="left:193.25px;top:590.18px;font-size:12.50px;line-height:12.50px;color:#444444;font-family:'Liberation Sans', sans-serif;">19</div>
<div class="t" style="left:218.20px;top:590.85px;font-size:11.00px;line-height:11.00px;color:#333333;font-family:'Liberation Sans', sans-serif;">Microwave</div>
<div class="t" style="left:514.23px;top:590.85px;font-size:11.00px;line-height:11.00px;color:#333333;font-family:'Liberation Sans', sans-serif;font-style:italic;">120</div>
<div class="t" style="left:680.59px;top:590.85px;font-size:11.00px;line-height:11.00px;color:#333333;font-family:'Liberation Sans', sans-serif;font-style:italic;">48</div>
<div class="t" style="left:700.60px;top:590.85px;font-size:11.00px;line-height:11.00px;color:#333333;font-family:'Liberation Sans', sans-serif;transform:scaleX(0.9608);transform-origin:0 0;">Slow Selling</div>
<div class="t" style="left:193.25px;top:611.30px;font-size:12.50px;line-height:12.50px;color:#444444;font-family:'Liberation Sans', sans-serif;">20</div>
<div class="t" style="left:218.20px;top:611.97px;font-size:11.00px;line-height:11.00px;color:#333333;font-family:'Liberation Sans', sans-serif;">Coffee Maker</div>
<div class="t" style="left:520.39px;top:611.97px;font-size:11.00px;line-height:11.00px;color:#333333;font-family:'Liberation Sans', sans-serif;font-style:italic;">90</div>
<div class="t" style="left:680.53px;top:611.97px;font-size:11.00px;line-height:11.00px;color:#333333;font-family:'Liberation Sans', sans-serif;font-style:italic;">75</div>
<div class="t" style="left:700.60px;top:611.97px;font-size:11.00px;line-height:11.00px;color:#333333;font-family:'Liberation Sans', sans-serif;transform:scaleX(0.9413);transform-origin:0 0;">Fast Selling</div>
<div class="t" style="left:239.60px;top:186.58px;font-size:10.30px;line-height:10.30px;color:#404040;font-family:'Liberation Sans', sans-serif;font-weight:bold;transform:scaleX(0.9889);transform-origin:0 0;">Product</div>
<div class="t" style="left:400.10px;top:186.58px;font-size:10.30px;line-height:10.30px;color:#404040;font-family:'Liberation Sans', sans-serif;font-weight:bold;transform:scaleX(0.9649);transform-origin:0 0;">Price</div>
<div class="t" style="left:561.20px;top:186.58px;font-size:10.30px;line-height:10.30px;color:#404040;font-family:'Liberation Sans', sans-serif;font-weight:bold;transform:scaleX(1.0082);transform-origin:0 0;">Quantity Sold</div>
<div class="t" style="left:721.90px;top:186.58px;font-size:10.30px;line-height:10.30px;color:#404040;font-family:'Liberation Sans', sans-serif;font-weight:bold;">Product Category</div>
<svg class="r" style="left:0;top:0" width="1536" height="625" viewBox="0 0 1536 625"><rect x="25.5" y="56.5" width="26" height="23" fill="#fff" stroke="#808080"/><rect x="42.5" y="56.5" width="9" height="23" fill="#c3d5ea" stroke="#808080"/><path d="M26 65.5 H42" stroke="#cfcfcf"/><path d="M26 70 H42" stroke="#cfcfcf"/><path d="M26 74.5 H42" stroke="#cfcfcf"/><path d="M34.5 57 V79" stroke="#b8b8b8"/><rect x="25" y="56" width="15" height="4.6" fill="#7f7f7f"/><path d="M42.2 52 L49.3 52 L45.6 58.8 L48.6 58.8 L38.6 70 L40.9 61.6 L38.3 61.6 Z" fill="#ebc06f" stroke="#f3f4f6" stroke-width="0.8"/><rect x="78.5" y="56.5" width="27" height="23" fill="#fff" stroke="#808080"/><rect x="96.5" y="56.5" width="9" height="23" fill="#c3d5ea" stroke="#808080"/><path d="M79 65.5 H96" stroke="#cfcfcf"/><path d="M79 70 H96" stroke="#cfcfcf"/><path d="M79 74.5 H96" stroke="#cfcfcf"/><path d="M87.5 57 V79" stroke="#9a9a9a"/><rect x="78" y="56" width="14" height="4.6" fill="#7f7f7f"/><path d="M99.70 57.60 L103.00 57.60 M99.03 59.23 L101.36 61.56 M97.40 59.90 L97.40 63.20 M95.77 59.23 L93.44 61.56 M95.10 57.60 L91.80 57.60 M95.77 55.97 L93.44 53.64 M97.40 55.30 L97.40 52.00 M99.03 55.97 L101.36 53.64 " stroke="#ebc06f" stroke-width="1.1" stroke-linecap="round"/><circle cx="97.4" cy="57.6" r="2.18" fill="#fff" stroke="#ebc06f" stroke-width="1.1"/><rect x="132.5" y="57.5" width="26" height="23" fill="#fff" stroke="#808080"/><rect x="132.5" y="57.5" width="9" height="23" fill="#c3d5ea" stroke="#808080"/><path d="M142 65.5 H150" stroke="#cfcfcf"/><path d="M142 70 H150" stroke="#cfcfcf"/><path d="M142 75 H150" stroke="#cfcfcf"/><rect x="132" y="57" width="21" height="4" fill="#7f7f7f"/><rect x="146" y="62" width="14" height="22" fill="#f3f4f6"/><path d="M142 65.5 H149 M142 70 H149 M142 75 H149" stroke="#cfcfcf"/><path d="M150.5 62 V80" stroke="#d0d0d0"/><text x="146.5" y="80.5" font-family="Liberation Serif" font-style="italic" font-size="16" fill="#555">f</text><text x="151.5" y="80.5" font-family="Liberation Serif" font-style="italic" font-size="12" fill="#555">x</text><path d="M158.5 66 V74" stroke="#9a9a9a"/><path d="M159.90 58.30 L163.20 58.30 M159.23 59.93 L161.56 62.26 M157.60 60.60 L157.60 63.90 M155.97 59.93 L153.64 62.26 M155.30 58.30 L152.00 58.30 M155.97 56.67 L153.64 54.34 M157.60 56.00 L157.60 52.70 M159.23 56.67 L161.56 54.34 " stroke="#ebc06f" stroke-width="1.1" stroke-linecap="round"/><circle cx="157.6" cy="58.3" r="2.18" fill="#fff" stroke="#ebc06f" stroke-width="1.1"/><rect x="188.5" y="54.5" width="5" height="11" fill="#fff" stroke="#7f7f7f"/><rect x="188" y="54" width="6" height="2.2" fill="#6f6f6f"/><path d="M189 58.5 H193 M189 61.5 H193" stroke="#c8c8c8"/><path d="M197.90 56.00 L199.90 56.00 M197.52 56.92 L198.93 58.33 M196.60 57.30 L196.60 59.30 M195.68 56.92 L194.27 58.33 M195.30 56.00 L193.30 56.00 M195.68 55.08 L194.27 53.67 M196.60 54.70 L196.60 52.70 M197.52 55.08 L198.93 53.67 " stroke="#ebc06f" stroke-width="0.9" stroke-linecap="round"/><circle cx="196.6" cy="56" r="1.23" fill="#fff" stroke="#ebc06f" stroke-width="0.9"/><rect x="193.5" y="61.5" width="9" height="6.5" fill="#fff" stroke="#7f7f7f"/><path d="M196 63.8 H200 M196 65.6 H200 M199.2 62.7 L196.8 66.8" stroke="#555" stroke-width="0.8"/><path d="M200.5 55 V60" stroke="#9a9a9a" stroke-width="0.8"/><rect x="188.5" y="73.5" width="10" height="13" fill="#fff" stroke="#7f7f7f"/><rect x="195" y="74" width="3" height="12" fill="#c3d5ea"/><path d="M189 79.5 H195 M189 83 H195 M192 79 V86" stroke="#9a9a9a"/><rect x="189" y="74" width="6" height="5" fill="#fbe9c6"/><path d="M193.20 76.50 L195.00 76.50 M192.85 77.35 L194.12 78.62 M192.00 77.70 L192.00 79.50 M191.15 77.35 L189.88 78.62 M190.80 76.50 L189.00 76.50 M191.15 75.65 L189.88 74.38 M192.00 75.30 L192.00 73.50 M192.85 75.65 L194.12 74.38 " stroke="#ebc06f" stroke-width="0.9" stroke-linecap="round"/><circle cx="192" cy="76.5" r="1.14" fill="#fff" stroke="#ebc06f" stroke-width="0.9"/><text x="199.3" y="78.5" font-family="Liberation Sans" font-size="5" font-weight="bold" fill="#3b78c2">1</text><text x="199.3" y="83" font-family="Liberation Sans" font-size="5" font-weight="bold" fill="#3b78c2">2</text><text x="199.3" y="87.5" font-family="Liberation Sans" font-size="5" font-weight="bold" fill="#3b78c2">3</text><path d="M194 98.5 H188 V106 H192" fill="none" stroke="#7f7f7f"/><rect x="192.5" y="101.5" width="9.5" height="7" fill="#fff" stroke="#7f7f7f"/><path d="M200.10 96.80 L202.10 96.80 M199.72 97.72 L201.13 99.13 M198.80 98.10 L198.80 100.10 M197.88 97.72 L196.47 99.13 M197.50 96.80 L195.50 96.80 M197.88 95.88 L196.47 94.47 M198.80 95.50 L198.80 93.50 M199.72 95.88 L201.13 94.47 " stroke="#ebc06f" stroke-width="0.9" stroke-linecap="round"/><circle cx="198.8" cy="96.8" r="1.23" fill="#fff" stroke="#ebc06f" stroke-width="0.9"/><rect x="316" y="63.5" width="26" height="13.5" fill="none" stroke="#c6c6c6" stroke-width="0.8"/><rect x="314.9" y="62.4" width="2.2" height="2.2" fill="#6a6a6a"/><rect x="340.9" y="62.4" width="2.2" height="2.2" fill="#6a6a6a"/><rect x="314.9" y="75.9" width="2.2" height="2.2" fill="#6a6a6a"/><rect x="340.9" y="75.9" width="2.2" height="2.2" fill="#6a6a6a"/><text x="317.3" y="74.6" font-family="Liberation Sans" font-size="12.2" fill="#707070" textLength="23.5" lengthAdjust="spacingAndGlyphs">ABC</text><path d="M325 68.8 L337.6 56.2" stroke="#3b78c2" stroke-width="3" stroke-linecap="butt"/><path d="M338.5 55.3 L340.4 53.4" stroke="#3b78c2" stroke-width="3"/><path d="M323.6 70.2 L324.6 69" stroke="#3b78c2" stroke-width="1.5"/><rect x="356" y="53.5" width="8" height="14" fill="#d3dced"/><path d="M352.5 67 V58.5 H355.5 M367 67 V58.5 H364" fill="none" stroke="#b9c8de" stroke-width="1"/><path d="M357.5 61 L362.5 64 M362.5 61 L357.5 64" stroke="#b9c8de" stroke-width="0.8"/><text x="352.3" y="80.3" font-family="Liberation Sans" font-size="7.6" fill="#555" textLength="14.5" lengthAdjust="spacingAndGlyphs">ABC</text><text x="352.3" y="88.4" font-family="Liberation Sans" font-size="8.5" fill="#555" textLength="14.5" lengthAdjust="spacingAndGlyphs">123</text><text x="352.3" y="101" font-family="Liberation Sans" font-size="8.2" fill="#555" textLength="13" lengthAdjust="spacingAndGlyphs">abc</text><path d="M353.5 101.5 V104.5 H358.5" fill="none" stroke="#3b78c2" stroke-width="1.3"/><path d="M357.3 102.6 L359.5 104.5 L357.3 106.4" fill="none" stroke="#3b78c2" stroke-width="1.2"/><rect x="359.5" y="103" width="7.5" height="6" fill="#fff" stroke="#7f7f7f" stroke-width="0.9"/><path d="M359.5 104.8 H367 M362 105 V109 M364.5 105 V109" stroke="#9a9a9a" stroke-width="0.7"/><path d="M466 54 H477.5" stroke="#a2b3cc" stroke-width="1.2"/><path d="M467 55.5 L476 66.8 M476 55.5 L467 66.8" stroke="#a2b3cc" stroke-width="2"/><ellipse cx="484" cy="62" rx="5.2" ry="5.1" fill="none" stroke="#a2b3cc" stroke-width="2"/><path d="M484 57 H491" stroke="#a2b3cc" stroke-width="2"/><path d="M484 70.8 H472.8 L478.2 76.4 L472.8 82 H484" fill="none" stroke="#a2b3cc" stroke-width="1.8"/><rect x="510.5" y="54.3" width="12.5" height="12.5" fill="#a0b1cb"/><rect x="525.2" y="54.3" width="12.5" height="12.5" fill="#a0b1cb"/><rect x="510.5" y="69" width="12.5" height="12.5" fill="#a0b1cb"/><rect x="525.2" y="69" width="12.5" height="12.5" fill="#a0b1cb"/><path d="M512.5 60.6 H520.8 M516.7 56.3 V64.8 M527 60.6 H536" stroke="#fff" stroke-width="1.3"/><path d="M512.5 75.3 H520.8 M527.5 71.2 L535.5 79.3 M535.5 71.2 L527.5 79.3" stroke="#fff" stroke-width="1.2"/><circle cx="516.7" cy="72.6" r="0.9" fill="#fff"/><circle cx="516.7" cy="78" r="0.9" fill="#fff"/><text x="555.5" y="76.3" font-family="Liberation Sans" font-size="18.6" fill="#a2b3cc">10</text><text x="574.6" y="65.4" font-family="Liberation Sans" font-size="11.4" fill="#a2b3cc">2</text><path d="M595 66.5 L608.5 53.5 V66.5 Z" fill="#e9eef6" stroke="#a2b3cc" stroke-width="1"/><path d="M604 66.5 V62 H608.5" fill="none" stroke="#a2b3cc" stroke-width="0.9"/><path d="M598.5 63.8 Q600 65 599.8 66.5" fill="none" stroke="#a2b3cc" stroke-width="0.8"/><text x="598" y="80" font-family="Liberation Sans" font-size="8" fill="#a2b3cc">.00</text><text x="601" y="87.5" font-family="Liberation Sans" font-size="8" fill="#a2b3cc">.0</text><path d="M595 84.5 H600.5 M598.2 82.3 L600.6 84.5 L598.2 86.7" fill="none" stroke="#a2b3cc" stroke-width="1.2"/><rect x="594.5" y="94.5" width="13.5" height="13.5" fill="#e2e9f4" stroke="#a2b3cc"/><path d="M601.25 95 V108 M595 101.25 H608" stroke="#a2b3cc" stroke-width="0.8"/><text x="596.2" y="100.6" font-family="Liberation Sans" font-size="6" fill="#8799b5">1</text><text x="596.2" y="107.2" font-family="Liberation Sans" font-size="6" fill="#8799b5">2</text><path d="M603 98 H606.5 M603 104.6 H606.5 M604.75 102.8 V106.4" stroke="#8799b5" stroke-width="0.8"/><rect x="703.5" y="56.5" width="24.5" height="22" fill="#fff" stroke="#7f7f7f"/><rect x="703" y="56" width="25.5" height="3.2" fill="#6f6f6f"/><path d="M708.2 59 V78" stroke="#bdbdbd" stroke-width="0.9"/><path d="M713 59 V78" stroke="#bdbdbd" stroke-width="0.9"/><path d="M717.8 59 V78" stroke="#bdbdbd" stroke-width="0.9"/><path d="M722.6 59 V78" stroke="#bdbdbd" stroke-width="0.9"/><path d="M704 63.2 H727.5" stroke="#bdbdbd" stroke-width="0.9"/><path d="M704 67.8 H727.5" stroke="#bdbdbd" stroke-width="0.9"/><path d="M704 72.6 H727.5" stroke="#bdbdbd" stroke-width="0.9"/><rect x="718.2" y="63.6" width="4" height="4" fill="#fff" stroke="#e8823a" stroke-width="0.9"/><circle cx="755.8" cy="67.9" r="13.6" fill="#fff" stroke="#5f8fc8" stroke-width="1.2"/><path d="M756.2 58 V67.6 H763.2" fill="none" stroke="#707070" stroke-width="2"/><circle cx="797.2" cy="68.6" r="9.9" fill="#e9eef6" stroke="#a9bcd6" stroke-width="1.1"/><path d="M794.5 56.5 H800 M797.2 56.5 V58.7" stroke="#a9bcd6" stroke-width="1.3"/><path d="M797.3 61.8 V68.6 H801.5" fill="none" stroke="#a9bcd6" stroke-width="1"/><path d="M59.5 104.7 H64.5 L62 107.3 Z" fill="#222"/><path d="M272.7 79.9 H277.7 L275.2 82.5 Z" fill="#222"/><path d="M325.3 104.9 H330.3 L327.8 107.5 Z" fill="#222"/><path d="M404.8 79.5 H409.8 L407.3 82.1 Z" fill="#222"/><path d="M399.3 100.5 H404.3 L401.8 103.1 Z" fill="#222"/><path d="M476.2 105.0 H481.2 L478.7 107.6 Z" fill="#b9bec6"/><path d="M520.7 105.0 H525.7 L523.2 107.6 Z" fill="#b9bec6"/><path d="M566.2 105.0 H571.2 L568.7 107.6 Z" fill="#b9bec6"/><path d="M678.3 58.300000000000004 H683.3 L680.8 60.9 Z" fill="#b9bec6"/><path d="M660.7 79.0 H665.7 L663.2 81.6 Z" fill="#b9bec6"/><path d="M669.7 100.0 H674.7 L672.2 102.6 Z" fill="#b9bec6"/><path d="M712.7 105.0 H717.7 L715.2 107.6 Z" fill="#222"/><path d="M752.5 105.0 H757.5 L755 107.6 Z" fill="#222"/><path d="M795.0 105.0 H800.0 L797.5 107.6 Z" fill="#b9bec6"/><rect x="190.5" y="184.5" width="12" height="11" fill="#fff" stroke="#7a7a7a"/><rect x="190" y="184" width="13" height="2.5" fill="#3f75b8"/><path d="M190.5 189.3 H202.5 M190.5 192.5 H202.5 M194.5 186.5 V195.5 M198.5 186.5 V195.5" stroke="#7a7a7a" stroke-width="0.9"/><path d="M204.2 193.0 H210.2 L207.2 196.0 Z" fill="#555"/><text x="216.7" y="193.8" font-family="Liberation Sans" font-weight="bold" font-size="10" fill="#555" textLength="6.2" lengthAdjust="spacingAndGlyphs">A</text><text x="222.8" y="190.6" font-family="Liberation Sans" font-weight="bold" font-size="9.8" fill="#555" textLength="5.6" lengthAdjust="spacingAndGlyphs">B</text><text x="226.1" y="196.9" font-family="Liberation Sans" font-weight="bold" font-size="9.4" fill="#555" textLength="5.9" lengthAdjust="spacingAndGlyphs">C</text><path d="M378.7 189.6 L381.29999999999995 187.6 V194.6" fill="none" stroke="#555" stroke-width="1.8"/><text x="382.7" y="191" font-family="Liberation Sans" font-weight="bold" font-size="10.3" fill="#555" textLength="4.8" lengthAdjust="spacingAndGlyphs">2</text><text x="387.0" y="196.8" font-family="Liberation Sans" font-weight="bold" font-size="10.6" fill="#555" textLength="5" lengthAdjust="spacingAndGlyphs">3</text><path d="M539.6999999999999 189.6 L542.3 187.6 V194.6" fill="none" stroke="#555" stroke-width="1.8"/><text x="543.6999999999999" y="191" font-family="Liberation Sans" font-weight="bold" font-size="10.3" fill="#555" textLength="4.8" lengthAdjust="spacingAndGlyphs">2</text><text x="548.0" y="196.8" font-family="Liberation Sans" font-weight="bold" font-size="10.6" fill="#555" textLength="5" lengthAdjust="spacingAndGlyphs">3</text><text x="700" y="188.7" font-family="Liberation Sans" font-size="7.6" fill="#555" textLength="14" lengthAdjust="spacingAndGlyphs">ABC</text><text x="700" y="197.6" font-family="Liberation Sans" font-size="8.6" fill="#555" textLength="14.3" lengthAdjust="spacingAndGlyphs">123</text><rect x="20.5" y="171.5" width="12" height="11.5" fill="#fff" stroke="#7a7a7a"/><rect x="20" y="171" width="13" height="2.5" fill="#3f75b8"/><path d="M20.5 176.5 H32.5 M20.5 179.8 H32.5 M24.5 173.5 V183 M28.5 173.5 V183" stroke="#7a7a7a" stroke-width="0.9"/><path d="M1299.8 366.8 L1307.8 374.8 M1307.8 366.8 L1299.8 374.8" stroke="#555" stroke-width="1.2"/><path d="M1501.20 371.30 L1503.60 371.30 M1500.26 373.56 L1501.96 375.26 M1498.00 374.50 L1498.00 376.90 M1495.74 373.56 L1494.04 375.26 M1494.80 371.30 L1492.40 371.30 M1495.74 369.04 L1494.04 367.34 M1498.00 368.10 L1498.00 365.70 M1500.26 369.04 L1501.96 367.34 " stroke="#bdbdbd" stroke-width="2"/><circle cx="1498" cy="371.3" r="3.6" fill="none" stroke="#bdbdbd" stroke-width="2"/></svg>
<div class="r" style="left:693.6px;top:176px;width:167.6px;height:451px;border:4px solid #ec1c24;box-sizing:border-box;"></div>
</body></html>
